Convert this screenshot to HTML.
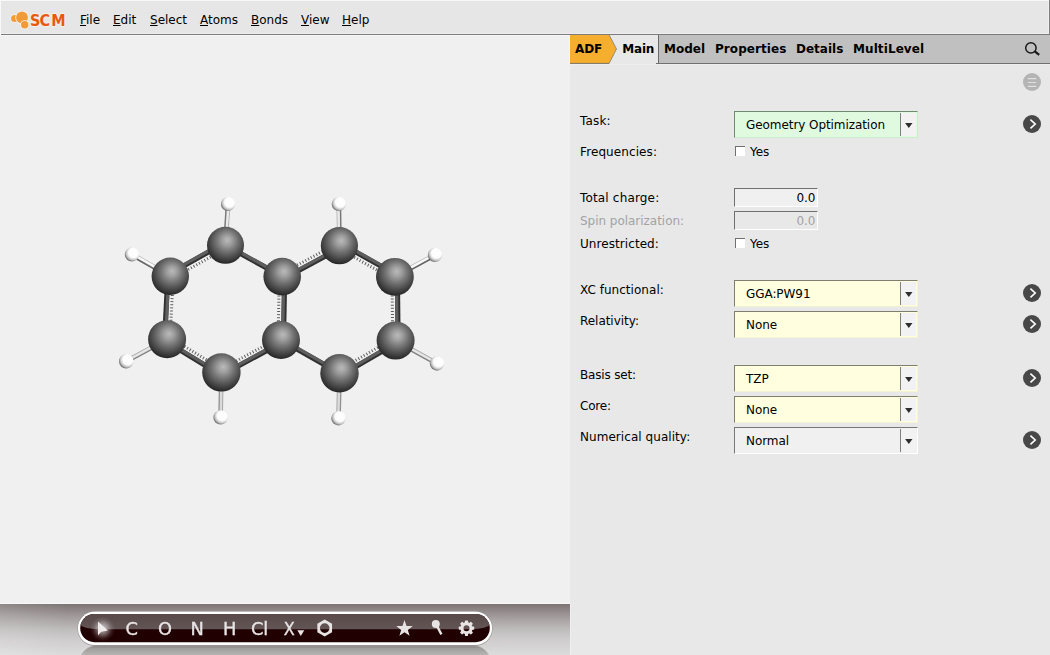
<!DOCTYPE html>
<html>
<head>
<meta charset="utf-8">
<title>ADFinput</title>
<style>
html,body{margin:0;padding:0;}
body{width:1050px;height:655px;overflow:hidden;position:relative;background:#e8e8e8;
  font-family:"DejaVu Sans","Liberation Sans",sans-serif;font-size:12px;color:#000;}
.abs{position:absolute;}
.t{position:absolute;white-space:nowrap;line-height:14px;height:14px;}
#menubar{left:0;top:0;width:1050px;height:34px;background:#e6e6e6;border-bottom:1px solid #7c7c7c;}
#menubar .t{top:13px;}
#menubar u{text-decoration:underline;text-decoration-thickness:1px;text-underline-offset:1px;}
#leftpane{left:0;top:35px;width:570px;height:569px;background:#f0f0f0;}
#toolbar{left:0;top:604px;width:570px;height:51px;overflow:hidden;
  background:linear-gradient(to bottom,#7d7373 0px,#958d8d 8px,#aaa5a5 16px,#c0bdbd 26px,#cfcdcd 36px,#dcdcdc 51px);}
#rightpane{left:570px;top:35px;width:480px;height:620px;background:#e8e8e8;}
#tabbar{left:570px;top:35px;width:480px;height:28px;background:#c0c0c0;border-bottom:1px solid #707070;}
#tabbar .t{font-weight:bold;top:7px;letter-spacing:0.17px;}
.lbl{left:580px;letter-spacing:0.12px;}
.dis{color:#a3a3a3;}
.combo{left:734px;width:182px;height:25px;border:1px solid;}
.combo .t{letter-spacing:-0.07px;}
.cbtn{left:165px;top:1px;width:15px;height:23px;background:#f2f2f2;border-left:1px solid #808080;}
.entry{left:734px;width:82px;height:17px;border:1px solid;border-color:#707070 #fff #fff #707070;background:#f0f0f0;}
.entry .t{right:1.5px;top:2px;}
.chk{left:735px;width:9px;height:9px;background:#fff;border:0 solid #707070;border-width:1px 0 0 1px;}
</style>
</head>
<body>
<div id="menubar" class="abs">
  <div class="t" style="left:80px;"><u>F</u>ile</div>
  <div class="t" style="left:113px;"><u>E</u>dit</div>
  <div class="t" style="left:150px;"><u>S</u>elect</div>
  <div class="t" style="left:200px;"><u>A</u>toms</div>
  <div class="t" style="left:251px;"><u>B</u>onds</div>
  <div class="t" style="left:301px;"><u>V</u>iew</div>
  <div class="t" style="left:342px;"><u>H</u>elp</div>
  <svg class="abs" style="left:8px;top:8px" width="62" height="24" viewBox="8 8 62 24">
    <circle cx="14.6" cy="18.5" r="4.3" fill="#f8f4f0"/><circle cx="14.6" cy="18.5" r="3.5" fill="#f09a38"/>
    <circle cx="22" cy="17.5" r="6.7" fill="#f8f4f0"/><circle cx="22" cy="17.5" r="5.9" fill="#f09a38"/>
    <circle cx="24.7" cy="24.7" r="4.5" fill="#f8f4f0"/><circle cx="24.7" cy="24.7" r="3.7" fill="#f09a38"/>
    <g font-family="'DejaVu Sans','Liberation Sans',sans-serif" font-weight="bold" font-size="15.7">
      <text transform="translate(0 25.75) scale(0.92 1)" x="32.72 42.93 55.65" fill="#f6f0ea" stroke="#f6f0ea" stroke-width="1.8" stroke-linejoin="round">SCM</text>
      <text transform="translate(0 25.75) scale(0.92 1)" x="32.72 42.93 55.65" fill="#e65a10">SCM</text>
    </g>
  </svg>
  <div class="abs" style="left:0;top:0;width:1050px;height:1px;background:#f8f8f8;"></div>
  <div class="abs" style="left:0;top:33px;width:1049px;height:1px;background:#eeeeee;"></div>
  <div class="abs" style="left:1048px;top:1px;width:1px;height:33px;background:#eeeeee;"></div>
  <div class="abs" style="left:1049px;top:0;width:1px;height:35px;background:#808080;"></div>
  <div class="abs" style="left:0;top:0;width:1px;height:35px;background:#f8f8f8;"></div>
</div>
<div id="leftpane" class="abs"><div class="abs" style="left:0;top:568px;width:570px;height:1px;background:#f8f8f8;"></div><div class="abs" style="left:0;top:0;width:570px;height:1px;background:#f8f8f8;"></div><div class="abs" style="left:569px;top:0;width:1px;height:29px;background:#f6f6fc;"></div></div>
<svg class="abs" style="left:0;top:35px" width="570" height="569" viewBox="0 35 570 569">
<defs>
<radialGradient id="gc" cx="0.53" cy="0.40" r="0.64" fx="0.55" fy="0.36">
<stop offset="0" stop-color="#bababa"/><stop offset="0.2" stop-color="#a0a0a0"/><stop offset="0.45" stop-color="#747474"/><stop offset="0.7" stop-color="#4c4c4c"/><stop offset="0.88" stop-color="#303030"/><stop offset="1" stop-color="#161616"/>
</radialGradient>
<radialGradient id="gh" cx="0.6" cy="0.4" r="0.7" fx="0.63" fy="0.36">
<stop offset="0" stop-color="#ffffff"/><stop offset="0.5" stop-color="#fcfcfc"/><stop offset="0.72" stop-color="#c4c4c4"/><stop offset="0.9" stop-color="#6a6a6a"/><stop offset="1" stop-color="#3a3a3a"/>
</radialGradient>
</defs>
<line x1="225.5" y1="245.3" x2="228.0" y2="204.0" stroke="#a2a2a2" stroke-width="4.6"/>
<line x1="225.85" y1="245.32" x2="228.35" y2="204.02" stroke="#eaeaea" stroke-width="2.5"/>
<line x1="223.80" y1="245.20" x2="226.30" y2="203.90" stroke="#505050" stroke-opacity="0.50" stroke-width="1.3"/>
<line x1="339.4" y1="245.7" x2="338.8" y2="204.0" stroke="#a2a2a2" stroke-width="4.6"/>
<line x1="339.03" y1="245.71" x2="338.43" y2="204.01" stroke="#ebebeb" stroke-width="2.5"/>
<line x1="341.10" y1="245.68" x2="340.50" y2="203.98" stroke="#505050" stroke-opacity="0.54" stroke-width="1.3"/>
<line x1="170.3" y1="276.3" x2="131.9" y2="254.4" stroke="#a2a2a2" stroke-width="4.6"/>
<line x1="170.59" y1="275.78" x2="132.19" y2="253.88" stroke="#f8f8f8" stroke-width="2.5"/>
<line x1="169.46" y1="277.78" x2="131.06" y2="255.88" stroke="#505050" stroke-opacity="0.80" stroke-width="1.3"/>
<line x1="394.9" y1="276.8" x2="434.9" y2="254.9" stroke="#a2a2a2" stroke-width="4.6"/>
<line x1="394.62" y1="276.28" x2="434.62" y2="254.38" stroke="#f8f8f8" stroke-width="2.5"/>
<line x1="395.72" y1="278.29" x2="435.72" y2="256.39" stroke="#505050" stroke-opacity="0.80" stroke-width="1.3"/>
<line x1="167.1" y1="339.2" x2="126.2" y2="361.3" stroke="#a2a2a2" stroke-width="4.6"/>
<line x1="166.96" y1="338.95" x2="126.06" y2="361.05" stroke="#e5e5e5" stroke-width="2.5"/>
<line x1="167.91" y1="340.70" x2="127.01" y2="362.80" stroke="#505050" stroke-opacity="0.42" stroke-width="1.3"/>
<line x1="395.6" y1="340.6" x2="437.0" y2="363.5" stroke="#a2a2a2" stroke-width="4.6"/>
<line x1="395.74" y1="340.34" x2="437.14" y2="363.24" stroke="#e6e6e6" stroke-width="2.5"/>
<line x1="394.78" y1="342.09" x2="436.18" y2="364.99" stroke="#505050" stroke-opacity="0.42" stroke-width="1.3"/>
<line x1="221.4" y1="372.4" x2="220.6" y2="417.4" stroke="#a2a2a2" stroke-width="4.6"/>
<line x1="221.54" y1="372.40" x2="220.74" y2="417.40" stroke="#dadada" stroke-width="2.5"/>
<line x1="219.70" y1="372.37" x2="218.90" y2="417.37" stroke="#505050" stroke-opacity="0.21" stroke-width="1.3"/>
<line x1="339.5" y1="373.2" x2="338.5" y2="418.2" stroke="#a2a2a2" stroke-width="4.6"/>
<line x1="339.35" y1="373.20" x2="338.35" y2="418.20" stroke="#dbdbdb" stroke-width="2.5"/>
<line x1="341.20" y1="373.24" x2="340.20" y2="418.24" stroke="#505050" stroke-opacity="0.22" stroke-width="1.3"/>
<line x1="226.9" y1="247.8" x2="171.7" y2="278.8" stroke="#5e5e5e" stroke-width="3" stroke-dasharray="1 2.1"/>
<line x1="224.28" y1="243.12" x2="169.08" y2="274.12" stroke="#303030" stroke-width="5.1"/>
<line x1="223.81" y1="242.29" x2="168.61" y2="273.29" stroke="#5e5e5e" stroke-width="3.2"/>
<line x1="173.2" y1="276.4" x2="170.0" y2="339.3" stroke="#5e5e5e" stroke-width="3" stroke-dasharray="1 2.1"/>
<line x1="167.80" y1="276.17" x2="164.60" y2="339.07" stroke="#303030" stroke-width="5.1"/>
<line x1="168.75" y1="276.22" x2="165.55" y2="339.12" stroke="#5e5e5e" stroke-width="3.2"/>
<line x1="168.6" y1="336.7" x2="222.9" y2="369.9" stroke="#5e5e5e" stroke-width="3" stroke-dasharray="1 2.1"/>
<line x1="165.80" y1="341.33" x2="220.10" y2="374.53" stroke="#303030" stroke-width="5.1"/>
<line x1="166.29" y1="340.52" x2="220.59" y2="373.72" stroke="#5e5e5e" stroke-width="3.2"/>
<line x1="220.0" y1="369.9" x2="279.6" y2="337.5" stroke="#5e5e5e" stroke-width="3" stroke-dasharray="1 2.1"/>
<line x1="222.59" y1="374.60" x2="282.19" y2="342.20" stroke="#303030" stroke-width="5.1"/>
<line x1="222.14" y1="373.76" x2="281.74" y2="341.36" stroke="#5e5e5e" stroke-width="3.2"/>
<line x1="278.1" y1="339.9" x2="279.3" y2="276.5" stroke="#5e5e5e" stroke-width="3" stroke-dasharray="1 2.1"/>
<line x1="283.50" y1="340.05" x2="284.70" y2="276.65" stroke="#303030" stroke-width="5.1"/>
<line x1="282.55" y1="340.03" x2="283.75" y2="276.63" stroke="#5e5e5e" stroke-width="3.2"/>
<line x1="282.20" y1="276.60" x2="225.50" y2="245.30" stroke="#303030" stroke-width="5.1"/>
<line x1="282.66" y1="275.77" x2="225.96" y2="244.47" stroke="#5e5e5e" stroke-width="3.2"/>
<line x1="280.8" y1="274.0" x2="338.0" y2="243.1" stroke="#5e5e5e" stroke-width="3" stroke-dasharray="1 2.1"/>
<line x1="283.39" y1="278.80" x2="340.59" y2="247.90" stroke="#303030" stroke-width="5.1"/>
<line x1="282.94" y1="277.96" x2="340.14" y2="247.06" stroke="#5e5e5e" stroke-width="3.2"/>
<line x1="338.0" y1="248.2" x2="393.5" y2="279.3" stroke="#5e5e5e" stroke-width="3" stroke-dasharray="1 2.1"/>
<line x1="340.62" y1="243.52" x2="396.12" y2="274.62" stroke="#303030" stroke-width="5.1"/>
<line x1="341.09" y1="242.69" x2="396.59" y2="273.79" stroke="#5e5e5e" stroke-width="3.2"/>
<line x1="392.0" y1="276.8" x2="392.7" y2="340.6" stroke="#5e5e5e" stroke-width="3" stroke-dasharray="1 2.1"/>
<line x1="397.40" y1="276.77" x2="398.10" y2="340.57" stroke="#303030" stroke-width="5.1"/>
<line x1="396.45" y1="276.78" x2="397.15" y2="340.58" stroke="#5e5e5e" stroke-width="3.2"/>
<line x1="394.1" y1="338.1" x2="338.0" y2="370.7" stroke="#5e5e5e" stroke-width="3" stroke-dasharray="1 2.1"/>
<line x1="396.86" y1="342.76" x2="340.76" y2="375.36" stroke="#303030" stroke-width="5.1"/>
<line x1="396.38" y1="341.94" x2="340.28" y2="374.54" stroke="#5e5e5e" stroke-width="3.2"/>
<line x1="339.50" y1="373.20" x2="281.00" y2="340.00" stroke="#303030" stroke-width="5.1"/>
<line x1="339.97" y1="372.37" x2="281.47" y2="339.17" stroke="#5e5e5e" stroke-width="3.2"/>
<circle cx="225.5" cy="245.3" r="18.5" fill="url(#gc)"/>
<circle cx="339.4" cy="245.7" r="18.6" fill="url(#gc)"/>
<circle cx="170.3" cy="276.3" r="18.7" fill="url(#gc)"/>
<circle cx="282.2" cy="276.6" r="18.8" fill="url(#gc)"/>
<circle cx="394.9" cy="276.8" r="18.9" fill="url(#gc)"/>
<circle cx="167.1" cy="339.2" r="19.0" fill="url(#gc)"/>
<circle cx="281.0" cy="340.0" r="19.0" fill="url(#gc)"/>
<circle cx="395.6" cy="340.6" r="19.0" fill="url(#gc)"/>
<circle cx="221.4" cy="372.4" r="19.2" fill="url(#gc)"/>
<circle cx="339.5" cy="373.2" r="19.2" fill="url(#gc)"/>
<circle cx="228.0" cy="204.0" r="7.1" fill="url(#gh)"/>
<circle cx="338.8" cy="204.0" r="7.1" fill="url(#gh)"/>
<circle cx="131.9" cy="254.4" r="7.1" fill="url(#gh)"/>
<circle cx="434.9" cy="254.9" r="7.1" fill="url(#gh)"/>
<circle cx="126.2" cy="361.3" r="7.2" fill="url(#gh)"/>
<circle cx="437.0" cy="363.5" r="7.2" fill="url(#gh)"/>
<circle cx="220.6" cy="417.4" r="7.2" fill="url(#gh)"/>
<circle cx="338.5" cy="418.2" r="7.2" fill="url(#gh)"/>
</svg>
<div id="toolbar" class="abs">
<svg class="abs" style="left:0;top:0;will-change:transform" width="570" height="51" viewBox="0 604 570 51">
<defs>
<clipPath id="pc"><rect x="80.2" y="614" width="409.6" height="28.2" rx="14.1"/></clipPath>
<linearGradient id="gl" x1="0" y1="0" x2="0" y2="1"><stop offset="0" stop-color="#574747"/><stop offset="1" stop-color="#635555"/></linearGradient>
<linearGradient id="rf" x1="0" y1="0" x2="0" y2="1"><stop offset="0" stop-color="#767070" stop-opacity=".95"/><stop offset="0.1" stop-color="#9c9898" stop-opacity=".9"/><stop offset="0.3" stop-color="#b2afaf" stop-opacity=".9"/></linearGradient>
<radialGradient id="glow"><stop offset="0" stop-color="#fff" stop-opacity=".72"/><stop offset="0.4" stop-color="#fff" stop-opacity=".4"/><stop offset="0.75" stop-color="#fff" stop-opacity=".1"/><stop offset="1" stop-color="#fff" stop-opacity="0"/></radialGradient>
<linearGradient id="lft" x1="0" y1="0" x2="1" y2="0"><stop offset="0" stop-color="#fff" stop-opacity=".14"/><stop offset="1" stop-color="#fff" stop-opacity="0"/></linearGradient>
</defs>
<rect x="0" y="604" width="70" height="51" fill="url(#lft)"/>
<rect x="79" y="645.3" width="412" height="33" rx="16.5" fill="url(#rf)" stroke="#e4e2e2" stroke-opacity=".55" stroke-width="2"/>
<rect x="77.4" y="611.2" width="415.2" height="34.8" rx="17.4" fill="#4a4040" opacity=".35"/>
<rect x="77.9" y="611.5" width="414.2" height="33.6" rx="16.8" fill="#ffffff"/>
<rect x="80.2" y="614" width="409.6" height="28.2" rx="14.1" fill="#200000"/>
<path clip-path="url(#pc)" d="M78 610 L492 610 L492 622.5 Q488 629.2 472 629.2 L98 629.2 Q82 629.2 78 622.5 Z" fill="url(#gl)"/>
<circle cx="102.6" cy="629" r="12.5" fill="url(#glow)" clip-path="url(#pc)"/>
<path d="M98.0 621.5 L98.0 635.3 L101.3 631.8 L107.9 630.5 Z" fill="#f0ecec"/>
<g font-family="'DejaVu Sans','Liberation Sans',sans-serif" font-size="17.8" fill="#e8e4e4" stroke="#e8e4e4" stroke-width="0.35">
<text x="125.6" y="635">C</text>
<text x="158" y="635">O</text>
<text x="190.4" y="635">N</text>
<text x="222.9" y="635">H</text>
<text x="251" y="635" textLength="17.3" lengthAdjust="spacing">Cl</text>
<text x="283.8" y="635" textLength="11" lengthAdjust="spacingAndGlyphs">X</text>
</g>
<path d="M297.3 630.3 L304.3 630.3 L300.8 636 Z" fill="#e8e4e4"/>
<path fill-rule="evenodd" d="M324.70 619.60 L332.06 623.85 L332.06 632.35 L324.70 636.60 L317.34 632.35 L317.34 623.85 Z M329.5 628.1 A4.8 4.8 0 1 0 319.9 628.1 A4.8 4.8 0 1 0 329.5 628.1 Z" fill="#e8e4e4"/>
<path d="M404.50 620.10 L406.56 625.97 L412.77 626.11 L407.83 629.88 L409.61 635.84 L404.50 632.30 L399.39 635.84 L401.17 629.88 L396.23 626.11 L402.44 625.97 Z" fill="#e8e4e4"/>
<circle cx="435.8" cy="623.9" r="4.0" fill="#e8e4e4"/><path d="M437 626 L441.4 634.4" stroke="#e8e4e4" stroke-width="2.4" fill="none"/>
<g fill="#e8e4e4"><path fill-rule="evenodd" d="M472.6 628.2 A6.1 6.1 0 1 0 460.4 628.2 A6.1 6.1 0 1 0 472.6 628.2 Z M469.5 628.2 A3 3 0 1 1 463.5 628.2 A3 3 0 1 1 469.5 628.2 Z"/><rect x="464.9" y="620.5" width="3.2" height="4" rx="0.6" transform="rotate(0 466.5 628.2)"/><rect x="464.9" y="620.5" width="3.2" height="4" rx="0.6" transform="rotate(45 466.5 628.2)"/><rect x="464.9" y="620.5" width="3.2" height="4" rx="0.6" transform="rotate(90 466.5 628.2)"/><rect x="464.9" y="620.5" width="3.2" height="4" rx="0.6" transform="rotate(135 466.5 628.2)"/><rect x="464.9" y="620.5" width="3.2" height="4" rx="0.6" transform="rotate(180 466.5 628.2)"/><rect x="464.9" y="620.5" width="3.2" height="4" rx="0.6" transform="rotate(225 466.5 628.2)"/><rect x="464.9" y="620.5" width="3.2" height="4" rx="0.6" transform="rotate(270 466.5 628.2)"/><rect x="464.9" y="620.5" width="3.2" height="4" rx="0.6" transform="rotate(315 466.5 628.2)"/></g>
</svg>
</div>
<div id="rightpane" class="abs"><div class="abs" style="left:0;top:29px;width:480px;height:1px;background:#eeeeee;"></div><div class="abs" style="left:0;top:569px;width:1px;height:51px;background:#efefef;"></div></div>
<div id="tabbar" class="abs">
  <div class="abs" style="left:39px;top:0;width:47px;height:29px;background:#e8e8e8;"></div>
  <div class="abs" style="left:86px;top:0;width:2px;height:28px;background:#e8e8e8;"></div>
  <div class="abs" style="left:88px;top:0;width:1px;height:28px;background:#6a6a6a;"></div>
  <svg class="abs" style="left:0;top:0" width="50" height="29" viewBox="0 0 50 29"><path d="M0 0 L39.2 0 L46.5 14 L39.1 28.5 L0 28.5 Z" fill="#f5ae2e"/><path d="M39.2 0 L46.5 14 L39.1 28.4 L0 28.4" fill="none" stroke="#687078" stroke-width="0.9" opacity=".75"/></svg>
  <div class="t" style="left:5px;letter-spacing:-0.13px;">ADF</div>
  <div class="t" style="left:52.3px;letter-spacing:-0.2px;">Main</div>
  <div class="t" style="left:94px;letter-spacing:0px;">Model</div>
  <div class="t" style="left:145px;letter-spacing:0.06px;">Properties</div>
  <div class="t" style="left:226px;letter-spacing:0px;">Details</div>
  <div class="t" style="left:283px;letter-spacing:0.09px;">MultiLevel</div>
  <svg class="abs" style="left:450px;top:2px" width="24" height="24" viewBox="1020 37 24 24"><circle cx="1030.9" cy="47.9" r="5.2" fill="none" stroke="#1a1a1a" stroke-width="1.5"/><path d="M1034.8 51.4 L1039.2 54.9" stroke="#1a1a1a" stroke-width="2.3" fill="none"/></svg>
</div>
<svg class="abs" style="left:1022px;top:72px" width="20" height="20" viewBox="0 0 20 20"><circle cx="10" cy="10" r="9" fill="#b4b4b4"/><path d="M5.8 6.7 H14.2 M5.8 10.5 H14.2 M5.8 14.4 H14.2" stroke="#e0e0e0" stroke-width="1.2"/></svg>

<div class="t lbl " style="top:114px;letter-spacing:0.17px;">Task:</div>
<div class="abs combo" style="top:111px;background:#e0fae0;border-color:#6f8a6f #cdeecd #cdeecd #6f8a6f;">
<div class="t" style="left:11px;top:6px;">Geometry Optimization</div>
<div class="abs cbtn"></div>
<svg class="abs" style="left:170px;top:11px" width="9" height="6" viewBox="0 0 9 6"><path d="M0.1 0 L7.5 0 L3.8 4.9 Z" fill="#2e2e2e"/></svg>
</div>
<svg class="abs" style="left:1022px;top:114px" width="20" height="20" viewBox="0 0 20 20"><circle cx="10" cy="10" r="9" fill="#484848"/><path d="M8.4 5.7 L13.2 10 L8.5 14.3" fill="none" stroke="#fff" stroke-width="1.6" stroke-linecap="butt" stroke-linejoin="miter"/></svg>
<div class="t lbl " style="top:145px;letter-spacing:0.1px;">Frequencies:</div>
<div class="abs chk" style="top:146px"></div><div class="t" style="left:750px;top:145px;">Yes</div>
<div class="t lbl " style="top:191px;letter-spacing:0.17px;">Total charge:</div>
<div class="abs entry" style="top:188px"><div class="t">0.0</div></div>
<div class="t lbl dis" style="top:214px;letter-spacing:-0.03px;">Spin polarization:</div>
<div class="abs entry" style="top:211px;background:#e8e8e8;"><div class="t dis">0.0</div></div>
<div class="t lbl " style="top:237px;letter-spacing:0.07px;">Unrestricted:</div>
<div class="abs chk" style="top:238px"></div><div class="t" style="left:750px;top:237px;">Yes</div>
<div class="t lbl " style="top:283px;letter-spacing:0.04px;">XC functional:</div>
<div class="abs combo" style="top:280px;background:#ffffe0;border-color:#7f7f70 #f4f4d4 #f4f4d4 #7f7f70;">
<div class="t" style="left:11px;top:6px;">GGA:PW91</div>
<div class="abs cbtn"></div>
<svg class="abs" style="left:170px;top:11px" width="9" height="6" viewBox="0 0 9 6"><path d="M0.1 0 L7.5 0 L3.8 4.9 Z" fill="#2e2e2e"/></svg>
</div>
<svg class="abs" style="left:1022px;top:283px" width="20" height="20" viewBox="0 0 20 20"><circle cx="10" cy="10" r="9" fill="#484848"/><path d="M8.4 5.7 L13.2 10 L8.5 14.3" fill="none" stroke="#fff" stroke-width="1.6" stroke-linecap="butt" stroke-linejoin="miter"/></svg>
<div class="t lbl " style="top:314px;letter-spacing:-0.04px;">Relativity:</div>
<div class="abs combo" style="top:311px;background:#ffffe0;border-color:#7f7f70 #f4f4d4 #f4f4d4 #7f7f70;">
<div class="t" style="left:11px;top:6px;">None</div>
<div class="abs cbtn"></div>
<svg class="abs" style="left:170px;top:11px" width="9" height="6" viewBox="0 0 9 6"><path d="M0.1 0 L7.5 0 L3.8 4.9 Z" fill="#2e2e2e"/></svg>
</div>
<svg class="abs" style="left:1022px;top:314px" width="20" height="20" viewBox="0 0 20 20"><circle cx="10" cy="10" r="9" fill="#484848"/><path d="M8.4 5.7 L13.2 10 L8.5 14.3" fill="none" stroke="#fff" stroke-width="1.6" stroke-linecap="butt" stroke-linejoin="miter"/></svg>
<div class="t lbl " style="top:368px;letter-spacing:-0.18px;">Basis set:</div>
<div class="abs combo" style="top:365px;background:#ffffe0;border-color:#7f7f70 #f4f4d4 #f4f4d4 #7f7f70;">
<div class="t" style="left:11px;top:6px;">TZP</div>
<div class="abs cbtn"></div>
<svg class="abs" style="left:170px;top:11px" width="9" height="6" viewBox="0 0 9 6"><path d="M0.1 0 L7.5 0 L3.8 4.9 Z" fill="#2e2e2e"/></svg>
</div>
<svg class="abs" style="left:1022px;top:368px" width="20" height="20" viewBox="0 0 20 20"><circle cx="10" cy="10" r="9" fill="#484848"/><path d="M8.4 5.7 L13.2 10 L8.5 14.3" fill="none" stroke="#fff" stroke-width="1.6" stroke-linecap="butt" stroke-linejoin="miter"/></svg>
<div class="t lbl " style="top:399px;letter-spacing:-0.2px;">Core:</div>
<div class="abs combo" style="top:396px;background:#ffffe0;border-color:#7f7f70 #f4f4d4 #f4f4d4 #7f7f70;">
<div class="t" style="left:11px;top:6px;">None</div>
<div class="abs cbtn"></div>
<svg class="abs" style="left:170px;top:11px" width="9" height="6" viewBox="0 0 9 6"><path d="M0.1 0 L7.5 0 L3.8 4.9 Z" fill="#2e2e2e"/></svg>
</div>
<div class="t lbl " style="top:430px;letter-spacing:0.055px;">Numerical quality:</div>
<div class="abs combo" style="top:427px;background:#f0f0f0;border-color:#787878 #ffffff #ffffff #787878;">
<div class="t" style="left:11px;top:6px;">Normal</div>
<div class="abs cbtn"></div>
<svg class="abs" style="left:170px;top:11px" width="9" height="6" viewBox="0 0 9 6"><path d="M0.1 0 L7.5 0 L3.8 4.9 Z" fill="#2e2e2e"/></svg>
</div>
<svg class="abs" style="left:1022px;top:430px" width="20" height="20" viewBox="0 0 20 20"><circle cx="10" cy="10" r="9" fill="#484848"/><path d="M8.4 5.7 L13.2 10 L8.5 14.3" fill="none" stroke="#fff" stroke-width="1.6" stroke-linecap="butt" stroke-linejoin="miter"/></svg>
</body>
</html>
